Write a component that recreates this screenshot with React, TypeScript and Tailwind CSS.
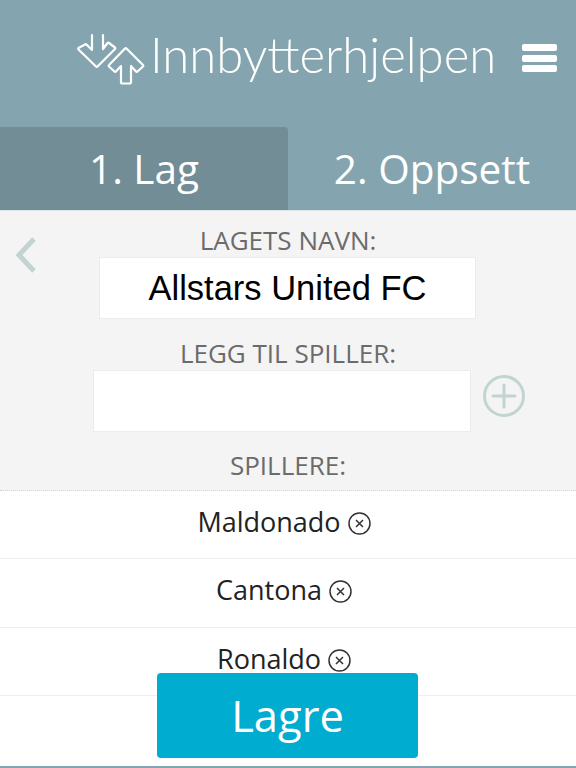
import type { ReactNode } from "react";

const players = ["Maldonado", "Cantona", "Ronaldo"];

function Logo() {
  return (
    <svg width="68" height="55" viewBox="0 0 68 55" fill="none" stroke="#fff" strokeWidth="2.2" strokeLinejoin="round" strokeLinecap="round" className="shrink-0">
      {/* down arrow */}
      <path d="M15 5v15L9.500 14.500a1 1 0 0 0-1.500 0L1.500 18a1 1 0 0 0 0 1.500L19 36.500a1 1 0 0 0 1.500 0L38 19a1 1 0 0 0 0-1.500L32 13a1 1 0 0 0-1.500 0L26 19V5" />
      {/* up arrow */}
      <path d="M48 18.500a1 1 0 0 1 1.500 0L66 35a1 1 0 0 1 0 1.500L60.500 41.500a1 1 0 0 1-1.500 0L54 36v16a1.500 1.500 0 0 1-1.500 1.500h-7A1.500 1.500 0 0 1 44 52V36l-5 5.500a1 1 0 0 1-1.500 0L32 36.500a1 1 0 0 1 0-1.500z" />
    </svg>
  );
}

function RemoveIcon() {
  return (
    <svg width="23" height="23" viewBox="0 0 23 23" fill="none" stroke="#333" strokeWidth="1.5" className="mt-[3px] shrink-0">
      <circle cx="11.5" cy="11.5" r="10.5" />
      <path d="M8 8l7 7M15 8l-7 7" />
    </svg>
  );
}

function Label({ className, children }: { className: string; children: ReactNode }) {
  return <div className={`text-[26px] leading-[30px] text-[#6b6b6b] ${className}`}>{children}</div>;
}

export default function App() {
  return (
    <div className="relative h-[768px] w-[576px] overflow-hidden bg-white font-['Open_Sans',sans-serif]">
      <header className="flex h-[127px] bg-[#84a5af] pl-[77px] pr-[19px] pt-[30px]">
        <Logo />
        <span className="-mt-[5px] ml-[5px] h-[58px] font-['Lato',sans-serif] text-[49px] leading-[58px] font-light text-white">Innbytterhjelpen</span>
        <div className="ml-auto mt-[14px] flex h-[28px] w-[35px] shrink-0 flex-col justify-between">
          <div className="h-[7px] rounded-[2px] bg-white" />
          <div className="h-[7px] rounded-[2px] bg-white" />
          <div className="h-[7px] rounded-[2px] bg-white" />
        </div>
      </header>

      <div className="grid h-[84px] grid-cols-2 border-b border-[#dfe5e7] bg-[#84a5af] text-center text-[40.5px] leading-[83px] text-white">
        <div className="rounded-tr-[4px] bg-[#728d95]">1. Lag</div>
        <div>2. Oppsett</div>
      </div>

      <div className="relative flex h-[280px] flex-col items-center border-b border-dotted border-[#c9d6d6] bg-[#f4f4f4]">
        <svg width="24" height="38" viewBox="0 0 24 38" fill="none" stroke="#c2d4d1" strokeWidth="5" className="absolute left-[14px] top-[25px]">
          <path d="M20 3L5 19l15 16" />
        </svg>
        <Label className="mt-[14px]">LAGETS NAVN:</Label>
        <div className="ml-[-1px] mt-[2px] flex h-[62px] w-[377px] items-center justify-center border border-[#ececec] bg-white pt-[2px] font-['Liberation_Sans',sans-serif] text-[34.5px] text-black">
          Allstars United FC
        </div>
        <Label className="mt-[19px]">LEGG TIL SPILLER:</Label>
        <div className="relative mt-[2px] h-[62px] w-[378px] translate-x-[-6px] border border-[#ececec] bg-white">
          <svg width="42" height="42" viewBox="0 0 42 42" fill="none" stroke="#c2d4d1" strokeWidth="3" strokeLinecap="round" className="absolute left-[389px] top-[4px]">
            <circle cx="21" cy="21" r="19.5" />
            <path d="M21 10v22M10 21h22" />
          </svg>
        </div>
        <Label className="mt-[18px]">SPILLERE:</Label>
      </div>

      <ul>
        {players.map((p) => (
          <li key={p} className="flex h-[68.33px] items-center justify-center gap-[7px] border-b border-[#eeeeee] pb-[5px] pr-[8px] text-[27px] text-[#222]">
            {p}
            <RemoveIcon />
          </li>
        ))}
      </ul>

      <button className="absolute left-[157px] top-[673px] h-[85px] w-[261px] rounded-[4px] bg-[#00acd0] text-[43.5px] text-white">Lagre</button>
      <div className="absolute bottom-0 left-0 h-[2px] w-full bg-[#84a5af]" />
    </div>
  );
}
